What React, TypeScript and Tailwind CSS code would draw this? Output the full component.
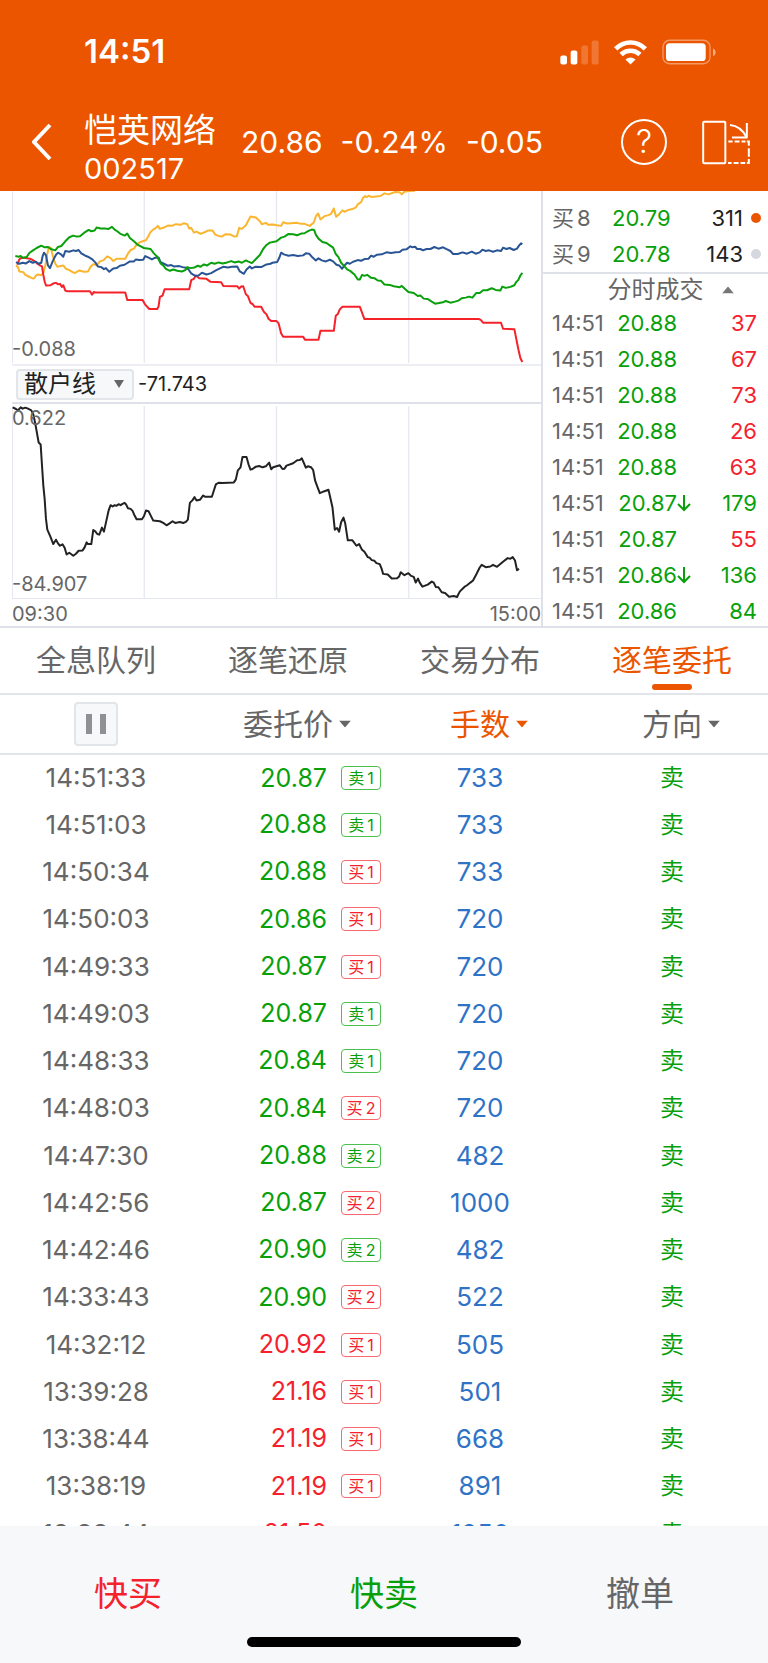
import type { ReactNode } from "react";

const GREEN = "text-[#08a00a]";
const RED = "text-[#f5212d]";

const bids = [
    { label: "买", level: 8, price: "20.79", qty: 311, active: true },
    { label: "买", level: 9, price: "20.78", qty: 143, active: false },
];

const trades = [
    { price: "20.88", qty: 37, up: true },
    { price: "20.88", qty: 67, up: true },
    { price: "20.88", qty: 73, up: true },
    { price: "20.88", qty: 26, up: true },
    { price: "20.88", qty: 63, up: true },
    { price: "20.87", qty: 179, up: false, drop: true },
    { price: "20.87", qty: 55, up: true },
    { price: "20.86", qty: 136, up: false, drop: true },
    { price: "20.86", qty: 84, up: false },
];

const tabs = ["全息队列", "逐笔还原", "交易分布", "逐笔委托"];

const orders = [
    { time: "14:51:33", price: "20.87", side: "卖", level: 1, qty: 733 },
    { time: "14:51:03", price: "20.88", side: "卖", level: 1, qty: 733 },
    { time: "14:50:34", price: "20.88", side: "买", level: 1, qty: 733 },
    { time: "14:50:03", price: "20.86", side: "买", level: 1, qty: 720 },
    { time: "14:49:33", price: "20.87", side: "买", level: 1, qty: 720 },
    { time: "14:49:03", price: "20.87", side: "卖", level: 1, qty: 720 },
    { time: "14:48:33", price: "20.84", side: "卖", level: 1, qty: 720 },
    { time: "14:48:03", price: "20.84", side: "买", level: 2, qty: 720 },
    { time: "14:47:30", price: "20.88", side: "卖", level: 2, qty: 482 },
    { time: "14:42:56", price: "20.87", side: "买", level: 2, qty: 1000 },
    { time: "14:42:46", price: "20.90", side: "卖", level: 2, qty: 482 },
    { time: "14:33:43", price: "20.90", side: "买", level: 2, qty: 522 },
    { time: "14:32:12", price: "20.92", side: "买", level: 1, qty: 505, up: true },
    { time: "13:39:28", price: "21.16", side: "买", level: 1, qty: 501, up: true },
    { time: "13:38:44", price: "21.19", side: "买", level: 1, qty: 668, up: true },
    { time: "13:38:19", price: "21.19", side: "买", level: 1, qty: 891, up: true },
    { time: "13:33:44", price: "21.50", qty: 1250, up: true },
];

const bigOrderLines = [
    {
        color: "#fbb52f",
        points:
            "48,240 54,245 58,258 70,260 76,268 86,273 96,278 102,279 108,270 114,267 124,269 130,262 136,240 142,205 147,185 153,188 158,210 166,235 172,244 190,240 198,250 208,254 218,260 224,263 238,255 252,259 264,258 272,244 280,236 290,240 300,228 310,225 322,213 332,218 340,227 350,220 376,220 384,205 392,194 402,190 410,178 418,172 428,168 438,165 444,155 452,140 460,133 468,128 474,122 480,131 492,127 504,121 516,122 528,117 542,119 552,114 562,117 568,130 574,128 582,142 590,139 602,146 614,141 624,136 638,136 646,148 656,152 666,154 676,147 692,148 704,154 711,153 718,128 726,131 738,120 752,94 768,97 780,108 786,117 798,113 806,119 820,118 830,120 844,122 850,111 862,115 874,114 890,113 904,116 914,116 930,122 942,112 948,94 955,85 962,103 974,93 986,90 994,86 1002,70 1009,95 1018,87 1028,76 1034,80 1044,75 1060,71 1068,67 1074,58 1084,51 1090,38 1096,33 1102,36 1108,32 1114,36 1122,35 1142,33 1154,25 1166,28 1186,21 1200,22 1206,28 1214,20 1228,18 1246,17",
    },
    {
        color: "#f5222a",
        points:
            "52,238 58,222 64,217 76,218 90,220 100,225 110,233 120,240 126,243 130,268 134,288 138,300 152,299 162,293 168,292 174,296 180,295 186,304 190,299 196,315 202,317 270,317 276,327 282,319 288,321 376,321 382,343 428,343 436,357 448,370 472,370 476,362 480,334 488,330 494,311 568,311 574,284 582,280 588,270 598,278 620,280 632,289 664,290 670,301 712,302 718,309 724,303 730,302 738,326 744,331 752,352 758,355 764,363 784,363 792,378 800,386 806,399 814,406 830,406 836,412 844,443 850,453 910,453 916,462 956,462 962,435 1002,435 1008,390 1014,385 1020,371 1028,363 1080,363 1094,400 1438,400 1444,403 1450,411 1504,411 1510,429 1544,430 1548,450 1556,490 1562,516 1568,528",
    },
    {
        color: "#2a5594",
        points:
            "48,230 58,235 68,232 78,234 88,227 98,232 108,229 116,235 124,232 128,212 132,202 138,210 144,240 150,248 158,228 168,208 174,202 182,206 190,214 196,197 208,199 220,195 228,197 236,194 244,204 256,211 264,214 276,221 286,231 294,243 304,245 312,251 318,248 328,259 340,249 350,248 360,241 374,238 390,228 402,228 408,222 418,224 430,223 436,212 446,217 456,222 466,217 476,216 482,230 492,235 504,241 514,239 522,243 538,242 548,245 558,247 566,252 574,264 586,271 596,270 606,262 620,267 634,263 648,255 660,249 670,244 684,246 696,244 712,243 720,258 732,265 740,252 750,243 756,249 766,244 784,245 800,237 812,235 818,232 832,230 838,218 844,202 852,207 866,211 880,209 894,212 910,210 918,204 928,205 936,214 948,225 956,219 966,225 978,228 990,223 1000,228 1010,238 1018,240 1027,250 1034,240 1042,232 1050,235 1060,229 1074,224 1084,226 1094,221 1106,220 1114,211 1122,214 1132,208 1146,207 1160,201 1174,203 1188,201 1200,200 1208,193 1220,192 1232,183 1238,186 1246,184 1252,191 1262,191 1270,195 1280,191 1292,191 1304,185 1316,190 1330,186 1342,192 1352,197 1360,206 1374,206 1388,201 1402,205 1416,199 1428,205 1440,201 1448,193 1458,197 1468,195 1480,199 1492,195 1504,197 1510,187 1520,191 1530,188 1542,194 1552,190 1558,181 1564,174 1568,177",
    },
    {
        color: "#0aa00c",
        points:
            "46,212 56,214 62,212 68,217 80,215 88,203 98,196 110,188 124,181 134,186 144,185 152,191 166,195 174,185 184,182 196,168 208,156 220,151 230,154 240,153 252,143 266,134 274,138 284,136 290,127 302,130 314,130 326,131 336,125 344,133 352,138 362,146 374,151 382,145 390,158 402,168 414,179 432,188 452,191 462,204 472,214 482,234 490,240 498,250 510,256 520,252 532,256 546,258 556,254 562,245 572,248 584,246 594,241 602,244 612,237 622,240 634,232 644,235 656,231 668,234 682,231 694,227 704,231 716,228 726,232 738,225 744,228 756,233 766,223 780,209 790,191 800,179 810,172 830,168 844,157 854,154 866,146 880,147 892,150 904,145 914,144 926,137 936,133 943,134 948,148 956,160 968,170 980,173 990,180 1000,187 1008,206 1016,215 1024,232 1034,243 1042,252 1052,257 1064,267 1074,282 1080,282 1087,268 1094,271 1102,268 1114,277 1124,278 1134,285 1144,286 1154,297 1170,298 1182,302 1200,305 1206,301 1216,310 1226,319 1242,322 1254,331 1262,330 1272,339 1284,340 1296,348 1306,354 1318,352 1330,350 1338,346 1352,351 1366,348 1376,345 1386,338 1398,336 1408,333 1418,336 1430,322 1440,322 1450,314 1462,314 1476,308 1488,313 1502,315 1508,303 1518,307 1532,304 1544,299 1550,289 1556,283 1562,270 1568,262",
    },
];

const retailLines = [
    {
        color: "#222222",
        points:
            "38,37 48,42 54,46 62,37 68,41 76,38 84,41 94,46 100,58 106,86 112,120 116,142 122,148 126,210 130,270 134,310 138,370 142,402 150,420 160,445 168,432 174,443 180,450 188,446 194,456 200,476 208,471 220,480 228,474 236,465 248,464 254,455 260,440 264,445 274,445 280,403 286,407 292,415 298,417 306,396 312,408 320,372 326,345 332,329 338,333 344,329 350,331 356,326 362,329 368,325 374,322 378,326 384,338 392,340 398,346 404,360 410,371 426,371 432,362 438,345 446,347 454,363 460,375 480,377 490,382 500,389 508,384 518,377 526,382 540,379 550,382 558,379 564,372 570,322 578,314 584,305 590,315 600,313 610,300 616,304 636,304 642,285 648,267 656,262 668,263 702,261 708,252 714,225 722,216 728,185 740,185 746,207 752,223 758,221 768,214 778,212 788,216 798,213 808,202 814,222 820,216 830,213 840,210 848,221 854,220 860,211 880,204 892,195 900,194 906,189 912,203 918,217 924,213 934,216 940,224 946,256 952,272 960,293 972,288 986,283 990,300 998,335 1005,402 1012,397 1018,408 1024,380 1031,366 1036,382 1044,434 1058,434 1070,450 1078,445 1086,461 1094,468 1104,484 1110,486 1116,493 1124,495 1130,502 1140,505 1146,520 1150,534 1164,536 1176,548 1192,547 1198,542 1203,529 1214,538 1226,532 1234,540 1242,543 1248,560 1255,548 1260,560 1268,572 1284,566 1296,557 1302,560 1308,573 1316,574 1326,589 1336,591 1348,602 1362,600 1372,603 1380,587 1394,573 1402,568 1412,560 1420,554 1430,535 1440,515 1446,507 1458,514 1472,512 1480,507 1492,513 1510,498 1524,487 1532,489 1539,484 1546,494 1552,523 1558,519",
    },
];

interface LineChartProps {
    lines: { color: string; points: string }[];
    viewBox: string;
    className: string;
    children?: ReactNode;
}

function LineChart({ lines, viewBox, className, children }: LineChartProps) {
    return (
        <div className={`relative text-xl text-[#666] ${className}`}>
            <svg viewBox={viewBox} preserveAspectRatio="none" className="block size-full" fill="none">
                {[37, 433, 830, 1227].map((x) => (
                    <path key={x} d={`M${x} 0V620`} stroke="#e6e8f0" strokeWidth="1.3" vectorEffect="non-scaling-stroke" />
                ))}
                {lines.map((line) => (
                    <polyline
                        key={line.color}
                        points={line.points}
                        stroke={line.color}
                        strokeWidth="2"
                        strokeLinejoin="round"
                        vectorEffect="non-scaling-stroke"
                    />
                ))}
            </svg>
            {children}
        </div>
    );
}

function Caret({ className }: { className: string }) {
    return (
        <svg viewBox="0 0 12 7" preserveAspectRatio="none" fill="currentColor" className={className}>
            <path d="M0 0h12L6 7z" />
        </svg>
    );
}

function StatusBar() {
    return (
        <div className="flex h-24 items-center justify-between pt-2 pr-[52px] pl-[84px]">
            <span className="text-[33px] font-semibold">14:51</span>
            <div className="flex items-center gap-[15px]">
                <svg viewBox="532 116 117 74" className="h-[25px] w-[39px]" fill="currentColor">
                    <rect x="533" y="162" width="20" height="27" rx="6" />
                    <rect x="564" y="147" width="20" height="42" rx="6" />
                    <rect x="596" y="132" width="20" height="57" rx="6" opacity=".2" />
                    <rect x="627" y="117" width="21" height="72" rx="6" opacity=".2" />
                </svg>
                <svg viewBox="0 0 98 74" className="h-[25px] w-[33px]">
                    <g fill="none" stroke="currentColor" strokeWidth="14">
                        <path d="M5 26C30 1 68 1 93 26" />
                        <path d="M21 43C37 28 61 28 77 43" />
                    </g>
                    <path d="M49 73 34 58q15-13 30 0z" fill="currentColor" />
                </svg>
                <svg viewBox="834 114 163 77" className="h-[26px] w-[54px]">
                    <rect x="837" y="117" width="142" height="71" rx="20" fill="none" stroke="currentColor" strokeWidth="4" opacity=".4" />
                    <rect x="846" y="126" width="120" height="54" rx="11" fill="currentColor" />
                    <path d="M988 141q8 4 8 12t-8 12z" fill="currentColor" opacity=".5" />
                </svg>
            </div>
        </div>
    );
}

function TitleBar() {
    return (
        <div className="flex h-[95px] items-center pr-[17px] pb-[3px] pl-8">
            <button type="button" aria-label="返回" className="w-[52px]">
                <svg viewBox="0 0 20 38" className="h-[38px] w-5" fill="none" stroke="currentColor" strokeWidth="4">
                    <path d="M18 2 2 19l16 17" />
                </svg>
            </button>
            <h1 className="w-[157px] self-end text-[33px] leading-10">
                恺英网络
                <span className="block text-[29px] leading-[38px]">002517</span>
            </h1>
            <p className="flex flex-1 gap-[18px] text-[30px]">
                <span>20.86</span>
                <span>-0.24%</span>
                <span>-0.05</span>
            </p>
            <div className="flex items-center gap-[35px]">
                <button type="button" aria-label="帮助" className="flex size-[46px] items-center justify-center rounded-full border-2 border-white text-[32px] font-light">
                    ?
                </button>
                <button type="button" aria-label="横屏">
                    <svg viewBox="954 356 147 136" className="h-[45px] w-[49px]" fill="none" stroke="currentColor" strokeWidth="6">
                        <rect x="957" y="361" width="67" height="126" rx="3" />
                        <path d="M1038 371q33 3 50 37M1089 365v44M1044 409h47" />
                        <path d="M1033 421h13m6 0h15m6 0h12m4 0h6v13m0 7v26m0 7v12h-6m-5 0h-14m-6 0h-15m-6 0h-11" />
                    </svg>
                </button>
            </div>
        </div>
    );
}

function ChartPanel() {
    return (
        <div className="min-w-0 flex-1 border-r-2 border-[#dfe1e8] pl-3">
            <LineChart lines={bigOrderLines} viewBox="36 18 1588 513" className="h-[172px]">
                <span className="absolute bottom-0 left-0 leading-7">-0.088</span>
            </LineChart>
            <div className="mt-px flex h-10 items-center gap-1 border-t-2 border-b-2 border-t-[#eceef4] border-b-[#dfe1e8] pl-1">
                <label className="relative h-[31px] w-[118px]">
                    <select
                        aria-label="指标"
                        className="size-full appearance-none rounded-sm border-2 border-[#e2e5ea] bg-[#f6f8fa] pl-1.5 text-2xl leading-none text-[#222]"
                    >
                        <option>散户线</option>
                    </select>
                    <Caret className="pointer-events-none absolute top-[11px] right-[10px] h-2 w-[10px] text-[#666]" />
                </label>
                <span className="text-xl text-[#222]">-71.743</span>
            </div>
            <LineChart lines={retailLines} viewBox="36 33 1588 573" className="mt-0.5 h-[192px]">
                <span className="absolute top-0 left-0 leading-6">0.622</span>
                <span className="absolute bottom-0 left-0 leading-7">-84.907</span>
            </LineChart>
            <div className="flex h-7 items-center justify-between border-t border-[#e6e8f0] pt-0.5 text-xl text-[#666]">
                <span>09:30</span>
                <span>15:00</span>
            </div>
        </div>
    );
}

function QuotePanel() {
    return (
        <div className="w-[225px] text-[22px]">
            <ul className="border-b-2 border-[#dfe1e8] pt-[9px] pr-[7px] pl-[9px]">
                {bids.map((bid) => (
                    <li key={bid.level} className="flex h-9 items-center">
                        <span className="flex w-[60px] gap-[3px] text-[#666]">
                            <span>{bid.label}</span>
                            <span>{bid.level}</span>
                        </span>
                        <span className={GREEN}>{bid.price}</span>
                        <span className="flex-1 text-right text-[#222]">{bid.qty}</span>
                        <span className={`ml-2 size-[10px] rounded-full ${bid.active ? "bg-[#eb5500]" : "bg-[#d5d8de]"}`} />
                    </li>
                ))}
            </ul>
            <button type="button" className="flex h-[31px] w-full items-center justify-center text-2xl text-[#666]">
                <span className="relative">
                    分时成交
                    <Caret className="absolute top-1/2 left-full ml-[18px] h-[7px] w-3 -translate-y-1/2 rotate-180 text-[#777]" />
                </span>
            </button>
            <ul className="-mb-[3px] pr-[11px] pl-[9px]">
                {trades.map((trade, i) => (
                    <li key={i} className="flex h-9 items-center">
                        <span className="w-14 text-[#666]">14:51</span>
                        <span className={`w-[69px] text-right ${GREEN}`}>{trade.price}</span>
                        {trade.drop && (
                            <svg viewBox="0 0 14 18" className={`h-[18px] w-[14px] ${GREEN}`} fill="none" stroke="currentColor" strokeWidth="2">
                                <path d="M7 1v15M1 10l6 6 6-6" />
                            </svg>
                        )}
                        <span className={`flex-1 text-right ${trade.up ? RED : GREEN}`}>{trade.qty}</span>
                    </li>
                ))}
            </ul>
        </div>
    );
}

function SortButton({ label, active }: { label: string; active?: boolean }) {
    return (
        <button type="button" className={`relative ${active ? "text-[#eb5500]" : "text-[#666]"}`}>
            {label}
            <Caret className="absolute top-1/2 left-full ml-[6px] h-[7px] w-3 -translate-y-1/2" />
        </button>
    );
}

function LevelBadge({ side, level }: { side: string; level?: number }) {
    const color = side === "卖" ? `border-[#4cc04e] ${GREEN}` : `border-[#f7686f] ${RED}`;

    return (
        <span className={`flex h-6 w-full items-center justify-center gap-[3px] rounded-sm border text-base leading-none ${color}`}>
            <span>{side}</span>
            <span>{level}</span>
        </span>
    );
}

function OrderTable() {
    return (
        <div className="min-h-0 flex-1 overflow-hidden">
            <table className="w-full table-fixed text-center text-[26px] leading-none text-[#666]">
                <thead>
                    <tr className="h-[59px] border-b-2 border-[#e3e5ec] text-[30px] *:font-normal">
                        <th>
                            <button
                                type="button"
                                aria-label="暂停"
                                className="mx-auto flex size-11 items-center justify-center gap-2 rounded-sm border-2 border-[#e2e5ea] bg-[#f6f8fa]"
                            >
                                <span className="h-5 w-[6px] bg-[#8f8f94]" />
                                <span className="h-5 w-[6px] bg-[#8f8f94]" />
                            </button>
                        </th>
                        <th><SortButton label="委托价" /></th>
                        <th><SortButton label="手数" active /></th>
                        <th><SortButton label="方向" /></th>
                    </tr>
                </thead>
                <tbody>
                    {orders.map((order) => (
                        <tr key={order.time} className="h-[47px] nth-[4n]:h-12">
                            <td>{order.time}</td>
                            <td>
                                <div className="flex items-center justify-center gap-[14px]">
                                    <span className={`w-[132px] text-right text-[25px] ${order.up ? RED : GREEN}`}>{order.price}</span>
                                    <span className="w-10">
                                        {order.side && <LevelBadge side={order.side} level={order.level} />}
                                    </span>
                                </div>
                            </td>
                            <td className="text-[#2f73c6]">{order.qty}</td>
                            <td className={`text-2xl leading-none ${GREEN}`}>卖</td>
                        </tr>
                    ))}
                </tbody>
            </table>
        </div>
    );
}

export default function App() {
    return (
        <div className="flex h-screen flex-col bg-white font-['Inter','Noto_Sans_CJK_SC',sans-serif]">
            <header className="bg-[#eb5500] text-white">
                <StatusBar />
                <TitleBar />
            </header>

            <section className="flex border-b-2 border-[#dfe1e8]">
                <ChartPanel />
                <QuotePanel />
            </section>

            <nav className="grid h-[67px] shrink-0 grid-cols-4 border-b-2 border-[#e3e5ec] text-[30px]">
                {tabs.map((tab, i) => (
                    <button
                        key={tab}
                        type="button"
                        className={`relative ${i === 3 ? "text-[#eb5500]" : "text-[#666]"}`}
                    >
                        {tab}
                        {i === 3 && <span className="absolute bottom-[3px] left-1/2 h-[6px] w-10 -translate-x-1/2 rounded-full bg-[#eb5500]" />}
                    </button>
                ))}
            </nav>

            <OrderTable />

            <footer className="bg-[#f6f8fa] pb-4">
                <div className="grid h-[111px] grid-cols-3 pt-6 text-[34px]">
                    <button type="button" className={RED}>快买</button>
                    <button type="button" className={GREEN}>快卖</button>
                    <button type="button" className="text-[#666]">撤单</button>
                </div>
                <div className="mx-auto h-[10px] w-[274px] rounded-full bg-black" />
            </footer>
        </div>
    );
}
